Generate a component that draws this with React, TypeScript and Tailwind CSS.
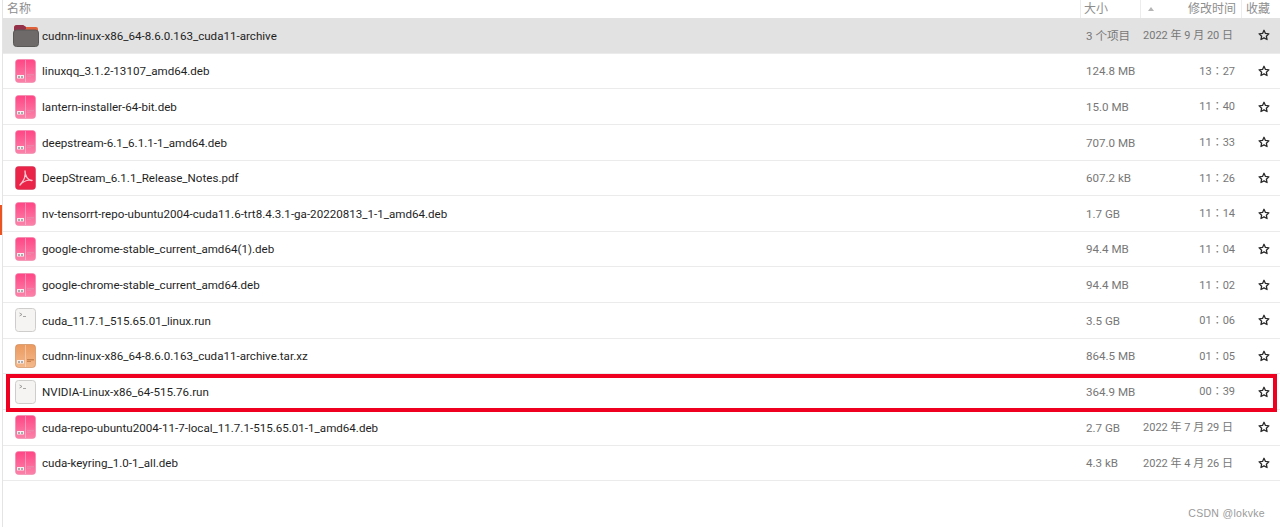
import React from "react";

type Kind = "folder" | "deb" | "pdf" | "run" | "xz";

const rows: { name: string; size: string; time: string; kind: Kind }[] = [
  { name: "cudnn-linux-x86_64-8.6.0.163_cuda11-archive", size: "3 个项目", time: "2022 年 9 月 20 日", kind: "folder" },
  { name: "linuxqq_3.1.2-13107_amd64.deb", size: "124.8 MB", time: "13：27", kind: "deb" },
  { name: "lantern-installer-64-bit.deb", size: "15.0 MB", time: "11：40", kind: "deb" },
  { name: "deepstream-6.1_6.1.1-1_amd64.deb", size: "707.0 MB", time: "11：33", kind: "deb" },
  { name: "DeepStream_6.1.1_Release_Notes.pdf", size: "607.2 kB", time: "11：26", kind: "pdf" },
  { name: "nv-tensorrt-repo-ubuntu2004-cuda11.6-trt8.4.3.1-ga-20220813_1-1_amd64.deb", size: "1.7 GB", time: "11：14", kind: "deb" },
  { name: "google-chrome-stable_current_amd64(1).deb", size: "94.4 MB", time: "11：04", kind: "deb" },
  { name: "google-chrome-stable_current_amd64.deb", size: "94.4 MB", time: "11：02", kind: "deb" },
  { name: "cuda_11.7.1_515.65.01_linux.run", size: "3.5 GB", time: "01：06", kind: "run" },
  { name: "cudnn-linux-x86_64-8.6.0.163_cuda11-archive.tar.xz", size: "864.5 MB", time: "01：05", kind: "xz" },
  { name: "NVIDIA-Linux-x86_64-515.76.run", size: "364.9 MB", time: "00：39", kind: "run" },
  { name: "cuda-repo-ubuntu2004-11-7-local_11.7.1-515.65.01-1_amd64.deb", size: "2.7 GB", time: "2022 年 7 月 29 日", kind: "deb" },
  { name: "cuda-keyring_1.0-1_all.deb", size: "4.3 kB", time: "2022 年 4 月 26 日", kind: "deb" },
];

function PackageIcon({ light, dark, mid, id }: { light: string; dark: string; mid: string; id: string }) {
  return (
    <svg width="21" height="24" viewBox="0 0 21 24" className="shrink-0">
      <defs>
        <linearGradient id={id} x1="0" y1="0" x2="0" y2="1">
          <stop offset="0" stopColor={dark} />
          <stop offset="1" stopColor={light} />
        </linearGradient>
      </defs>
      <rect x="0.5" y="0.5" width="20" height="23" rx="3" fill={`url(#${id})`} stroke={mid} strokeOpacity="0.6" />
      <rect x="10" y="1" width="1" height="22" fill="#ffffff" fillOpacity="0.35" />
      <rect x="2" y="16" width="7" height="3.5" fill="#f6f0f2" />
      <rect x="3" y="17.5" width="2" height="1" fill="#666" />
      <rect x="6" y="17.5" width="2" height="1" fill="#666" />
      <rect x="12" y="15" width="7" height="1.5" fill={mid} />
      <rect x="12" y="17" width="4" height="1" fill={mid} />
    </svg>
  );
}

function FileIcon({ kind, id }: { kind: Kind; id: string }) {
  if (kind === "folder") {
    return (
      <svg width="26" height="24" viewBox="0 0 26 24" className="shrink-0">
        <path d="M1 5a3 3 0 0 1 3-3h6l3 2h10a2 2 0 0 1 2 2v5H1z" fill="#e0603a" />
        <path d="M1 5a3 3 0 0 1 3-3h6l3 2v2l-3 2H1z" fill="#93304a" />
        <rect x="0.5" y="7" width="25" height="16.5" rx="3" fill="#6d6a69" stroke="#5a5857" />
      </svg>
    );
  }
  if (kind === "deb") return <PackageIcon id={id} dark="#ff4585" light="#fb83aa" mid="#ee84a8" />;
  if (kind === "xz") return <PackageIcon id={id} dark="#eb9a60" light="#f4b98b" mid="#c98450" />;
  if (kind === "pdf") {
    return (
      <svg width="21" height="24" viewBox="0 0 21 24" className="shrink-0">
        <rect x="0.5" y="0.5" width="20" height="23" rx="3" fill="#ea2349" stroke="#c8324f" strokeOpacity="0.5" />
        <path d="M10 5c.8 3.5-.5 9-5 14 3-3.5 8-5.5 12-4.5-3.5 0-7-4-7-9.5z" fill="none" stroke="#fcc6d0" strokeWidth="1.3" strokeLinejoin="round" />
      </svg>
    );
  }
  return (
    <svg width="21" height="24" viewBox="0 0 21 24" className="shrink-0">
      <rect x="0.5" y="0.5" width="20" height="23" rx="3" fill="#f5f4f3" stroke="#cfcdcb" />
      <path d="M4.5 5l2.5 1.5-2.5 1.5" fill="none" stroke="#8c8a88" strokeWidth="0.8" />
      <rect x="8" y="8" width="3" height="1" fill="#a8a6a4" />
    </svg>
  );
}

function Star() {
  return (
    <svg width="12" height="12" viewBox="0 0 24 24" className="shrink-0" fill="none" stroke="#2a2a2a" strokeWidth="2.6" strokeLinejoin="round">
      <path d="M12 2.5l2.9 6.3 6.9.8-5.1 4.7 1.4 6.8-6.1-3.4-6.1 3.4 1.4-6.8-5.1-4.7 6.9-.8z" />
    </svg>
  );
}

export default function App() {
  return (
    <div className="relative h-[527px] w-[1280px] overflow-hidden bg-white font-['Roboto','Noto_Sans_CJK_TC',sans-serif] text-[11.6px] text-[#2f2f2f]">
      <div className="absolute left-0 top-[205px] h-[30px] w-[2px] bg-[#e95420]" />
      <div className="ml-[2px] h-full border-l border-[#e4e4e4]">
        <div className="flex h-[18px] items-center font-['Roboto','Noto_Sans_CJK_SC',sans-serif] text-[12px] text-[#8e8e8e]">
          <div className="flex-1 pl-[4px]">名称</div>
          <div className="flex h-full w-[60px] items-center border-l border-[#ececec] pl-[3px]">大小</div>
          <div className="flex h-full w-[101px] items-center justify-between border-l border-[#ececec] pl-[7px] pr-[5px]">
            <span className="h-0 w-0 border-x-[3.5px] border-b-[4px] border-x-transparent border-b-[#b5b5b5]" />
            <span>修改时间</span>
          </div>
          <div className="flex h-full w-[39px] items-center border-l border-[#ececec] pl-[4px]">收藏</div>
        </div>
        {rows.map((r, i) => (
          <div
            key={r.name + i}
            className={`flex h-[35.65px] items-center border-b border-[#ebebeb] ${i === 0 ? "bg-[#e2e2e2]" : ""}`}
          >
            <div className={`flex w-[37px] shrink-0 ${r.kind === "folder" ? "pl-[10px]" : "pl-[12px]"}`}>
              <FileIcon kind={r.kind} id={`g${i}`} />
            </div>
            <div className="min-w-0 flex-1 pl-[2px] pt-[2px] text-[#1f1f1f]">{r.name}</div>
            <div className="w-[60px] whitespace-nowrap pl-[3px] pt-[2px] text-[#777]">{r.size}</div>
            <div className={`w-[92px] whitespace-nowrap pt-[2px] text-right text-[11px] text-[#777] ${r.time.length > 6 ? "pr-[2px]" : "pr-0"}`}>{r.time}</div>
            <div className="flex w-[45px] justify-center pl-[12px]">
              <Star />
            </div>
          </div>
        ))}
      </div>
      <div className="pointer-events-none absolute left-[6px] top-[374px] h-[38px] w-[1271px] border-4 border-[#f00020]" />
      <div className="absolute right-[15px] top-[506px] font-['Liberation_Sans',sans-serif] text-[10.5px] tracking-[0.3px] text-[#9a9a9a]">
        CSDN @lokvke
      </div>
    </div>
  );
}
